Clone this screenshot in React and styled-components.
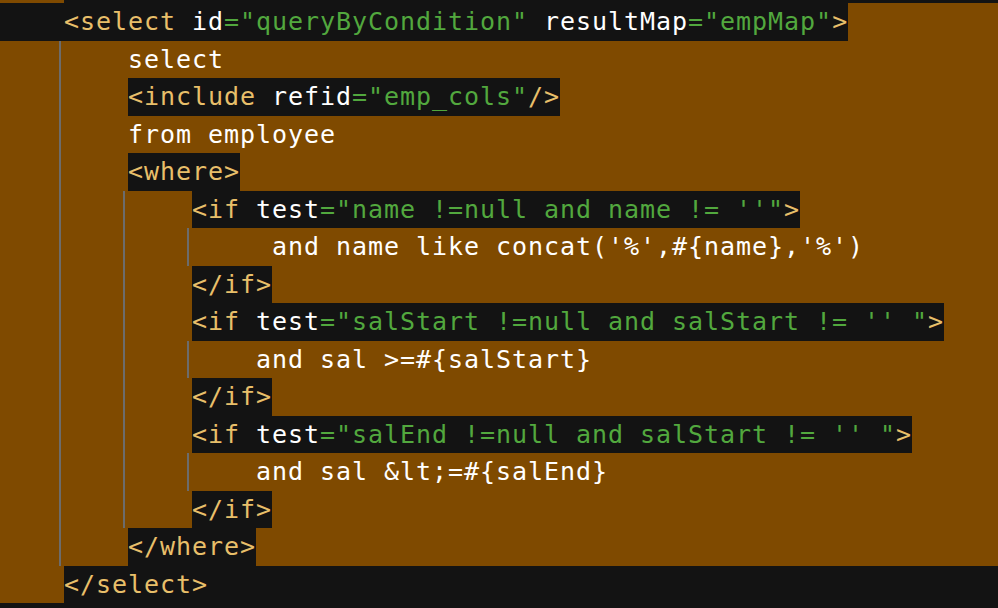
import React from "react";
import styled, { createGlobalStyle } from "styled-components";

const ORANGE = "#7f4a00";
const DARK = "#131313";

const Global = createGlobalStyle`
  html, body { margin: 0; padding: 0; background: ${DARK}; }
  body { overflow: hidden; }
`;

const Editor = styled.div`
  width: 998px;
  height: 608px;
  background: ${DARK};
  display: flex;
  flex-direction: column;
  font-family: "DejaVu Sans Mono", "Liberation Mono", monospace;
  font-size: 25px;
  letter-spacing: 0.95px;
  line-height: 37.5px;
  white-space: pre;
  overflow: hidden;
`;

const Strip = styled.div`
  height: 3px;
  display: flex;
`;

const StripBlock = styled.div`
  width: 64px;
  background: ${ORANGE};
`;

const Line = styled.div`
  height: 37.5px;
  display: flex;
  align-items: stretch;
  background: ${(p) => (p.$dark ? DARK : ORANGE)};
`;

const Indent = styled.div`
  flex: none;
  width: 59px;
  margin-right: 3px;
  border-right: 2px solid ${(p) => (p.$guide ? "#6c6c6c" : "transparent")};
  background: ${(p) => (p.$bg === "dark" ? DARK : p.$bg === "orange" ? ORANGE : "transparent")};
  box-shadow: ${(p) =>
    p.$bg === "dark" ? `3px 0 0 ${DARK}` : p.$bg === "orange" ? `3px 0 0 ${ORANGE}` : "none"};
`;

const TagBox = styled.span`
  display: block;
  background: ${DARK};
`;

const Plain = styled.span`
  display: block;
  color: #ffffff;
`;

const Tag = styled.span`
  color: #e8bf6a;
`;
const Attr = styled.span`
  color: #ffffff;
`;
const Val = styled.span`
  color: #52a83e;
`;

const tagLine = (name, attrs, close) => (
  <TagBox>
    <Tag>{name}</Tag>
    {attrs.map(([a, v]) => (
      <React.Fragment key={a}>
        {" "}
        <Attr>{a}</Attr>
        <Val>{`="${v}"`}</Val>
      </React.Fragment>
    ))}
    <Tag>{close}</Tag>
  </TagBox>
);

const lines = [
  { cells: ["dark"], body: tagLine("<select", [["id", "queryByCondition"], ["resultMap", "empMap"]], ">") },
  { cells: ["g", "-"], body: <Plain>select</Plain> },
  { cells: ["g", "-"], body: tagLine("<include", [["refid", "emp_cols"]], "/>") },
  { cells: ["g", "-"], body: <Plain>from employee</Plain> },
  { cells: ["g", "-"], body: tagLine("<where", [], ">") },
  { cells: ["g", "g", "-"], body: tagLine("<if", [["test", "name !=null and name != ''"]], ">") },
  { cells: ["g", "g", "g"], body: <Plain>{"     and name like concat('%',#{name},'%')"}</Plain> },
  { cells: ["g", "g", "-"], body: tagLine("</if", [], ">") },
  { cells: ["g", "g", "-"], body: tagLine("<if", [["test", "salStart !=null and salStart != '' "]], ">") },
  { cells: ["g", "g", "g"], body: <Plain>{"    and sal >=#{salStart}"}</Plain> },
  { cells: ["g", "g", "-"], body: tagLine("</if", [], ">") },
  { cells: ["g", "g", "-"], body: tagLine("<if", [["test", "salEnd !=null and salStart != '' "]], ">") },
  { cells: ["g", "g", "g"], body: <Plain>{"    and sal &lt;=#{salEnd}"}</Plain> },
  { cells: ["g", "g", "-"], body: tagLine("</if", [], ">") },
  { cells: ["g", "-"], body: tagLine("</where", [], ">") },
  { cells: ["orange"], dark: true, body: tagLine("</select", [], ">") },
];

export default function App() {
  return (
    <>
      <Global />
      <Editor>
        <Strip>
          <StripBlock />
        </Strip>
        {lines.map((l, i) => (
          <Line key={i} $dark={l.dark}>
            {l.cells.map((c, j) => (
              <Indent
                key={j}
                $guide={c === "g"}
                $bg={c === "dark" || c === "orange" ? c : undefined}
              />
            ))}
            {l.body}
          </Line>
        ))}
      </Editor>
    </>
  );
}
